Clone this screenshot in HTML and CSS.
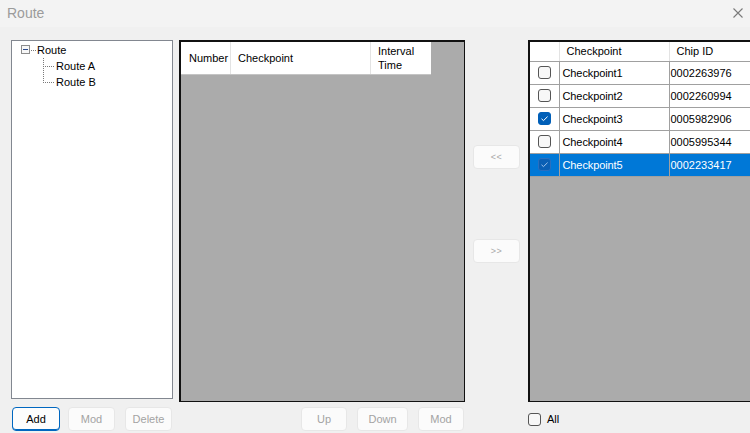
FILE: index.html
```html
<!DOCTYPE html>
<html>
<head>
<meta charset="utf-8">
<link rel="stylesheet" href="styles.css">
</head>
<body>
<div class="window">
  <header class="titlebar">
    <span class="title">Route</span>
    <svg class="close" width="10" height="10" viewBox="0 0 10 10"><path d="M0.5 0.5L9.5 9.5M9.5 0.5L0.5 9.5" stroke="#7a7a7a" stroke-width="1.1" fill="none"/></svg>
  </header>
  <main class="content">
    <div class="tree">
      <div class="node root">
        <span class="expander"><span class="minus"></span></span>
        <span class="connector"></span>
        <span class="label">Route</span>
      </div>
      <div class="children">
        <div class="node child"><span class="branch"></span><span class="label">Route A</span></div>
        <div class="node child last"><span class="branch"></span><span class="label">Route B</span></div>
      </div>
    </div>

    <div class="grid-mid">
      <div class="mid-head">
        <div class="hcell c-num">Number</div>
        <div class="hcell c-cp">Checkpoint</div>
        <div class="hcell c-int">Interval<br>Time</div>
      </div>
    </div>

    <div class="transfer">
      <button class="btn small">&lt;&lt;</button>
      <button class="btn small">&gt;&gt;</button>
    </div>

    <div class="grid-right">
      <table class="cp-table">
        <colgroup><col class="w-cb"><col class="w-cp"><col class="w-id"></colgroup>
        <thead>
          <tr><th></th><th>Checkpoint</th><th>Chip ID</th></tr>
        </thead>
        <tbody>
          <tr><td class="cb"><span class="check"></span></td><td>Checkpoint1</td><td class="id">0002263976</td></tr>
          <tr><td class="cb"><span class="check"></span></td><td>Checkpoint2</td><td class="id">0002260994</td></tr>
          <tr><td class="cb"><span class="check on"><svg width="11" height="11" viewBox="0 0 11 11"><path d="M2.5 5.8L4.5 7.6L8.6 3.6" stroke="#fff" stroke-width="1" fill="none"/></svg></span></td><td>Checkpoint3</td><td class="id">0005982906</td></tr>
          <tr><td class="cb"><span class="check"></span></td><td>Checkpoint4</td><td class="id">0005995344</td></tr>
          <tr class="sel"><td class="cb"><span class="check on"><svg width="11" height="11" viewBox="0 0 11 11"><path d="M2.5 5.8L4.5 7.6L8.6 3.6" stroke="#9fc3ec" stroke-width="1" fill="none"/></svg></span></td><td>Checkpoint5</td><td class="id">0002233417</td></tr>
        </tbody>
      </table>
    </div>

    <div class="btns left">
      <button class="btn focus w48">Add</button>
      <button class="btn w47">Mod</button>
      <button class="btn w47 gap10">Delete</button>
    </div>
    <div class="btns mid">
      <button class="btn w46">Up</button>
      <button class="btn w51">Down</button>
      <button class="btn w46">Mod</button>
    </div>
    <div></div>
    <label class="all"><span class="check"></span><span>All</span></label>
  </main>
</div>
</body>
</html>
```
FILE: styles.css
```css
* { box-sizing: border-box; }
html, body { margin: 0; padding: 0; }
body {
  width: 750px;
  height: 433px;
  overflow: hidden;
  background: #f0f0f0;
  font-family: "Liberation Sans", Arial, sans-serif;
  font-size: 11px;
  color: #000;
}
.window { width: 750px; height: 433px; overflow: hidden; }

.titlebar {
  height: 27px;
  background: #f3f3f3;
  display: flex;
  align-items: center;
  justify-content: space-between;
  padding: 0 8px 2px 7px;
}
.title { font-size: 14px; color: #9b9b9b; }
.close { margin-right: -1px; }

.content {
  display: grid;
  grid-template-columns: 168px 286px 63px 240px;
  grid-template-rows: 362px 24px;
  row-gap: 5px;
  padding: 13px 0 0 11px;
}

/* tree */
.tree {
  width: 162px;
  height: 359px;
  background: #fff;
  border: 1px solid #828790;
  padding-top: 1px;
}
.node { display: flex; align-items: center; height: 16px; }
.root { padding-left: 9px; }
.expander {
  width: 9px; height: 9px;
  border: 1px solid #8c8c8c;
  background: #f7f7f7;
  display: flex; align-items: center; justify-content: center;
  margin-top: -1px;
}
.minus { width: 5px; height: 1px; background: #2b4a8c; }
.connector {
  width: 5px; height: 1px;
  margin: 0 1px 0 1px;
  background: repeating-linear-gradient(to right, #7a7a7a 0 1px, transparent 1px 2px);
}
.children { padding-left: 31px; }
.branch {
  width: 12px; height: 16px;
  margin-right: 1px;
  background:
    repeating-linear-gradient(to bottom, #7a7a7a 0 1px, transparent 1px 2px) left top / 1px 100% no-repeat,
    repeating-linear-gradient(to right, #7a7a7a 0 1px, transparent 1px 2px) 2px 8px / 10px 1px no-repeat;
}
.child.last .branch {
  background:
    repeating-linear-gradient(to bottom, #7a7a7a 0 1px, transparent 1px 2px) left top / 1px 9px no-repeat,
    repeating-linear-gradient(to right, #7a7a7a 0 1px, transparent 1px 2px) 2px 8px / 10px 1px no-repeat;
}

/* middle grid */
.grid-mid {
  background: #ababab;
  border-top: 2px solid #111;
  border-left: 2px solid #111;
  border-right: 1px solid #111;
  border-bottom: 1px solid #111;
}
.mid-head {
  display: flex;
  width: 250px;
  height: 32px;
  background: #fff;
  box-shadow: 0 1px 0 #c4c4c4;
}
.hcell {
  display: flex;
  align-items: center;
  padding-left: 7px;
  border-right: 1px solid #e3e3e3;
  line-height: 14px;
}
.c-num { width: 50px; padding-left: 8px; }
.c-cp { width: 140px; }
.c-int { width: 60px; border-right: 0; }

/* transfer */
.transfer {
  display: flex;
  flex-direction: column;
  align-items: center;
  padding-top: 105px;
  gap: 70px;
}

/* buttons */
.btn {
  height: 24px;
  background: #fbfbfb;
  border: 1px solid #e7e7e7;
  border-radius: 4px;
  font-family: "Liberation Sans", Arial, sans-serif;
  font-size: 11px;
  color: #a3a3a3;
  padding: 0;
}
.btn.small { width: 47px; height: 24px; font-size: 9px; color: #a8a8a8; letter-spacing: 0.5px; }
.btn.focus { border: 1px solid #0067c0; color: #000; background: #fdfdfd; box-shadow: inset 0 -1px 0 #0067c0; }
.w46 { width: 46px; } .w47 { width: 47px; } .w48 { width: 48px; } .w51 { width: 51px; }
.btns { display: flex; align-items: center; }
.btns.left { gap: 8px; padding-left: 1px; }
.btns.left .gap10 { margin-left: 2px; }
.btns.mid { justify-content: flex-end; gap: 10px; padding-right: 1px; }

/* right grid */
.grid-right {
  background: #ababab;
  border-top: 2px solid #111;
  border-left: 2px solid #111;
  border-bottom: 1px solid #111;
  overflow: hidden;
}
.cp-table {
  border-collapse: collapse;
  table-layout: fixed;
  width: 249px;
}
.w-cb { width: 29px; }
.w-cp { width: 110px; }
.w-id { width: 110px; }
.cp-table th {
  height: 19px;
  background: #fff;
  font-weight: normal;
  text-align: left;
  padding: 0 0 1px 7px;
  border-right: 1px solid #e3e3e3;
  border-bottom: 1px solid #a0a0a0;
}
.cp-table td {
  height: 23px;
  background: #fff;
  padding: 0 0 0 3px;
  border-right: 1px solid #a0a0a0;
  border-bottom: 1px solid #a0a0a0;
  white-space: nowrap;
  letter-spacing: -0.1px;
}
.cp-table td.id { padding-left: 1px; letter-spacing: 0; }
.cp-table td.cb { padding: 0; text-align: center; }
.cp-table tr.sel td { background: #0078d7; color: #fff; }

.check {
  display: inline-flex;
  align-items: center;
  justify-content: center;
  width: 13px; height: 13px;
  border: 1px solid #555;
  border-radius: 3px;
  background: #f7f7f7;
  vertical-align: middle;
}
.check.on { background: #005fb8; border-color: #005fb8; }
tr.sel .check.on { background: #0a5fb4; border-color: #2a6fbf; }

.all { display: flex; align-items: center; gap: 6px; font-size: 11px; }
```
